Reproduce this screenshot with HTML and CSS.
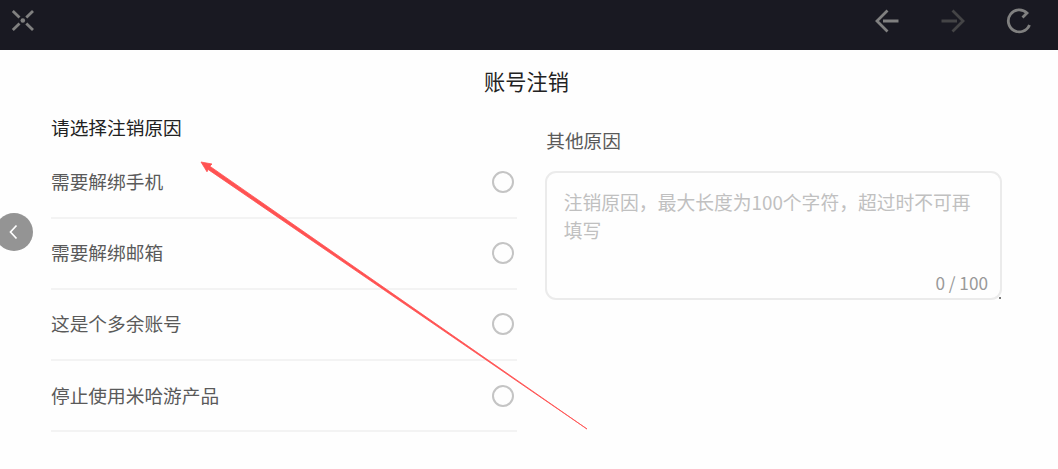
FILE: index.html
```
<!DOCTYPE html>
<html lang="zh-CN">
<head>
    <meta charset="UTF-8">
    <title>账号注销</title>
    <link rel="stylesheet" href="styles.css">
</head>
<body>
    <div class="topbar">
        <svg class="icon-close" width="24" height="24" viewBox="0 0 24 24">
            <path d="M1.800 2l6.700 6.500M22 2l-6.700 6.500M1.800 21l6.700-6.500M22 21l-6.700-6.500"/>
            <circle cx="11.800" cy="11.500" r="2.300"/>
        </svg>
        <div class="nav">
            <svg width="26" height="26" viewBox="0 0 26 26">
                <path d="M13.500 2.500L3 13l10.500 10.500M9 13h15.500"/>
            </svg>
            <svg class="disabled" width="26" height="26" viewBox="0 0 26 26">
                <path d="M12.500 2.500L23 13L12.500 23.500M1.500 13H17"/>
            </svg>
            <svg width="26" height="26" viewBox="0 0 26 26">
                <path d="M23.500 17A11 11 0 1 1 21 5L16.500 9.500"/>
            </svg>
        </div>
    </div>

    <div class="page">
        <h1 class="title">账号注销</h1>
        <div class="content">
            <div class="reasons">
                <h2>请选择注销原因</h2>
                <div class="reason"><span>需要解绑手机</span><i class="radio"></i></div>
                <div class="reason"><span>需要解绑邮箱</span><i class="radio"></i></div>
                <div class="reason"><span>这是个多余账号</span><i class="radio"></i></div>
                <div class="reason"><span>停止使用米哈游产品</span><i class="radio"></i></div>
            </div>
            <div class="other">
                <div class="label">其他原因</div>
                <div class="box">
                    <div class="placeholder">注销原因，最大长度为100个字符，超过时不可再填写</div>
                    <div class="count">0 / 100</div>
                    <i class="resizer"></i>
                </div>
            </div>
        </div>
    </div>

    <div class="back">
        <svg width="38" height="38" viewBox="0 0 38 38">
            <path d="M21.500 12.500L15.500 19L21.500 25.500"/>
        </svg>
    </div>

    <svg class="arrow" width="1058" height="469" viewBox="0 0 1058 469">
        <path d="M201 162L212 164L209.800 166.200L587 429L208 169.400L207 171.800Z"/>
    </svg>
</body>
</html>
```

FILE: styles.css
```
* {
    box-sizing: border-box;
}
body {
    margin: 0;
    height: 469px;
    overflow: hidden;
    position: relative;
    background: #fefefe;
    color: #5a5a5a;
    font-family: "Noto Sans CJK SC", sans-serif;
    font-size: 18.7px;
}
svg {
    display: block;
    fill: none;
}
.topbar {
    height: 50px;
    padding: 0 26px 9px 11px;
    display: flex;
    align-items: center;
    justify-content: space-between;
    background: #191922;
}
.topbar svg {
    stroke: #808080;
    stroke-width: 2.8;
}
.topbar circle {
    fill: #808080;
    stroke: none;
}
.topbar .disabled {
    stroke: #444446;
}
.nav {
    display: flex;
    gap: 40px;
}
.page {
    padding: 15px 56px 0 51px;
}
.title {
    margin: 0;
    font-size: 21.2px;
    font-weight: 400;
    line-height: 32px;
    text-align: center;
    color: #222;
}
.content {
    display: flex;
    gap: 28px;
}
.reasons {
    width: 466px;
    padding-top: 16px;
}
.reasons h2 {
    margin: 0 0 6.4px;
    font-size: 18.7px;
    font-weight: 400;
    line-height: 28px;
    color: #222;
}
.reason {
    height: 71.2px;
    display: flex;
    align-items: center;
    justify-content: space-between;
    padding-right: 3px;
    border-bottom: 2px solid #f3f3f3;
}
.reason span {
    padding-bottom: 3px;
}
.radio {
    width: 22px;
    height: 22px;
    border: 2px solid #c4c4c4;
    border-radius: 50%;
}
.other {
    width: 457px;
    padding-top: 29px;
}
.label {
    padding-left: 1px;
    line-height: 28px;
    margin-bottom: 17px;
}
.box {
    height: 129px;
    padding: 15px 12px 3px 16.5px;
    display: flex;
    flex-direction: column;
    justify-content: space-between;
    position: relative;
    border: 2px solid #ebebeb;
    border-radius: 11px;
}
.placeholder {
    font-size: 18.8px;
    line-height: 28px;
    color: #c0c0c0;
}
.count {
    font-size: 17.2px;
    line-height: 24px;
    text-align: right;
    color: #999;
}
.resizer {
    position: absolute;
    right: -1px;
    bottom: -1px;
    width: 2px;
    height: 2px;
    background: #777;
}
.back {
    position: absolute;
    left: -5px;
    top: 213px;
    width: 38px;
    height: 38px;
    border-radius: 50%;
    background: #949494;
}
.back path {
    stroke: #fff;
    stroke-width: 1.7;
}
.arrow {
    position: absolute;
    left: 0;
    top: 0;
    pointer-events: none;
}
.arrow path {
    fill: #ff5252;
    stroke: #ff5252;
    stroke-width: 0.8;
}
.other {
    margin-left: 0.5px;
}
```
